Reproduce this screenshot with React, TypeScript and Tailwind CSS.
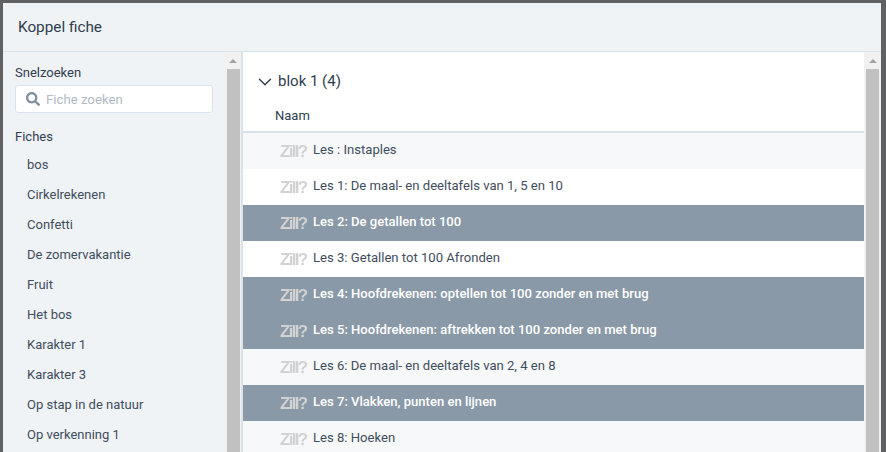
import { ChevronDown } from "lucide-react";
import { FaSearch } from "react-icons/fa";

const fiches = [
  "bos",
  "Cirkelrekenen",
  "Confetti",
  "De zomervakantie",
  "Fruit",
  "Het bos",
  "Karakter 1",
  "Karakter 3",
  "Op stap in de natuur",
  "Op verkenning 1",
];

const lessen = [
  { naam: "Les : Instaples", stijl: "odd" },
  { naam: "Les 1: De maal- en deeltafels van 1, 5 en 10", stijl: "even" },
  { naam: "Les 2: De getallen tot 100", stijl: "selected" },
  { naam: "Les 3: Getallen tot 100 Afronden", stijl: "even" },
  { naam: "Les 4: Hoofdrekenen: optellen tot 100 zonder en met brug", stijl: "selected" },
  { naam: "Les 5: Hoofdrekenen: aftrekken tot 100 zonder en met brug", stijl: "selected" },
  { naam: "Les 6: De maal- en deeltafels van 2, 4 en 8", stijl: "odd" },
  { naam: "Les 7: Vlakken, punten en lijnen", stijl: "selected" },
  { naam: "Les 8: Hoeken", stijl: "odd" },
];

function Scrollbar({ className }: { className: string }) {
  return (
    <div className={"w-[17px] shrink-0 h-full bg-[#f1f1f1] flex flex-col items-center " + className}>
      <div className="h-[17px] shrink-0 flex items-center justify-center">
        <div className="w-0 h-0 border-x-[4px] border-x-transparent border-b-[4px] border-b-[#a3a3a3]" />
      </div>
      <div className="w-[13px] flex-1 bg-[#c1c1c1]" />
    </div>
  );
}

export default function App() {
  return (
    <div className="w-[886px] h-[452px] overflow-hidden bg-[#5f6163] pt-[3px] pl-[3px] pr-[5px] font-['Roboto',sans-serif]">
      <div className="w-[878px] h-[449px] bg-white flex flex-col overflow-hidden">
        {/* Header */}
        <div className="h-[49px] shrink-0 bg-[#eff3f6] border-b border-[#dbe3ea] flex items-center px-[15px] pt-[1px]">
          <h1 className="text-[15.3px] text-[#2f3d4e]">Koppel fiche</h1>
        </div>

        <div className="flex flex-1 min-h-0">
          {/* Sidebar */}
          <div className="w-[240px] shrink-0 flex bg-[#eff3f6] border-r-2 border-[#dbe3ea]">
            <div className="flex-1 pl-[12px] pr-[11px] pt-[13px]">
              <div className="text-[13px] leading-[16px] text-[#2f3d4e]">Snelzoeken</div>
              <div className="mt-[4px] h-[28px] bg-white border border-[#dbe3ea] rounded-[3px] flex items-center pl-[10px] gap-[6px]">
                <FaSearch className="w-[14px] h-[14px] text-[#7d8e9e]" />
                <span className="pt-[1px] text-[13.2px] text-[#b0bac4]">Fiche zoeken</span>
              </div>
              <div className="mt-[16px] text-[13px] leading-[16px] text-[#2f3d4e]">Fiches</div>
              <ul className="mt-[5px]">
                {fiches.map((f) => (
                  <li key={f} className="h-[30px] pl-[12px] flex items-center text-[13px] text-[#3f4d5c]">
                    {f}
                  </li>
                ))}
              </ul>
            </div>
            <Scrollbar className="pl-[1px]" />
          </div>

          {/* Table */}
          <div className="flex-1 min-w-0 flex">
            <div className="flex-1 min-w-0">
              <div className="h-[57px] flex items-center pl-[11px] pt-[2px] gap-[2px] text-[15px] text-[#2f3d4e]">
                <ChevronDown className="w-[22px] h-[22px]" strokeWidth={1.5} />
                <span>blok 1 (4)</span>
              </div>
              <div className="h-[24px] pl-[32px] text-[13px] leading-[14px] text-[#2f3d4e] border-b-2 border-[#dbe3ea]">
                Naam
              </div>
              {lessen.map((les) => (
                <div
                  key={les.naam}
                  className={
                    les.stijl === "selected"
                      ? "h-[36px] flex items-center bg-[#8a99a8] text-white font-medium text-[13.05px]"
                      : les.stijl === "odd"
                        ? "h-[36px] flex items-center bg-[#f6f8f9] text-[#3f4d5c] text-[13.1px]"
                        : "h-[36px] flex items-center bg-white text-[#3f4d5c] text-[13.1px]"
                  }
                >
                  <span className="w-[70px] pl-[37px] translate-y-[1px] text-[17px] font-['Liberation_Sans',sans-serif] font-bold tracking-[-1.7px] text-[#d2d2d2] blur-[0.5px] shrink-0">
                    Zill?
                  </span>
                  <span className="pb-[2px]">{les.naam}</span>
                </div>
              ))}
            </div>
            <Scrollbar className="" />
          </div>
        </div>
      </div>
    </div>
  );
}
